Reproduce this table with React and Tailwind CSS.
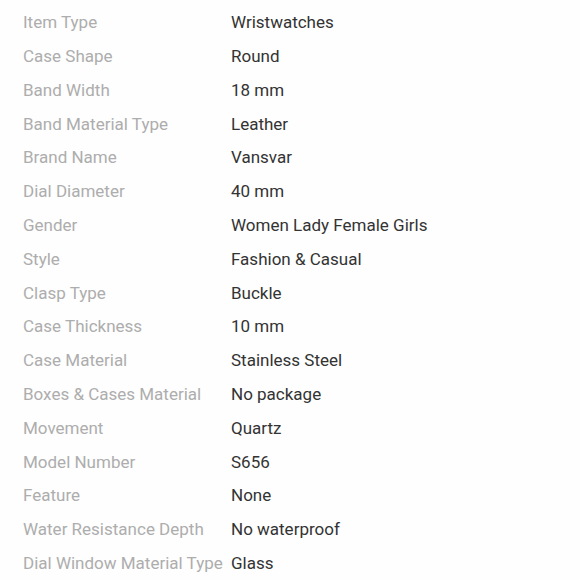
export default function App() {
  const rows = [
    ["Item Type", "Wristwatches"],
    ["Case Shape", "Round"],
    ["Band Width", "18 mm"],
    ["Band Material Type", "Leather"],
    ["Brand Name", "Vansvar"],
    ["Dial Diameter", "40 mm"],
    ["Gender", "Women Lady Female Girls"],
    ["Style", "Fashion & Casual"],
    ["Clasp Type", "Buckle"],
    ["Case Thickness", "10 mm"],
    ["Case Material", "Stainless Steel"],
    ["Boxes & Cases Material", "No package"],
    ["Movement", "Quartz"],
    ["Model Number", "S656"],
    ["Feature", "None"],
    ["Water Resistance Depth", "No waterproof"],
    ["Dial Window Material Type", "Glass"],
  ];
  return (
    <div className="w-[580px] h-[580px] bg-[#fefefe] pt-[6px] pl-[23px] overflow-hidden" style={{ fontFamily: "Roboto, sans-serif" }}>
      {rows.map(([k, v]) => (
        <div key={k} className="flex items-center h-[33.8px] text-[17px]">
          <div className="w-[208px] shrink-0 text-[#adadad] whitespace-nowrap">{k}</div>
          <div className="text-[#333333] whitespace-nowrap">{v}</div>
        </div>
      ))}
    </div>
  );
}
